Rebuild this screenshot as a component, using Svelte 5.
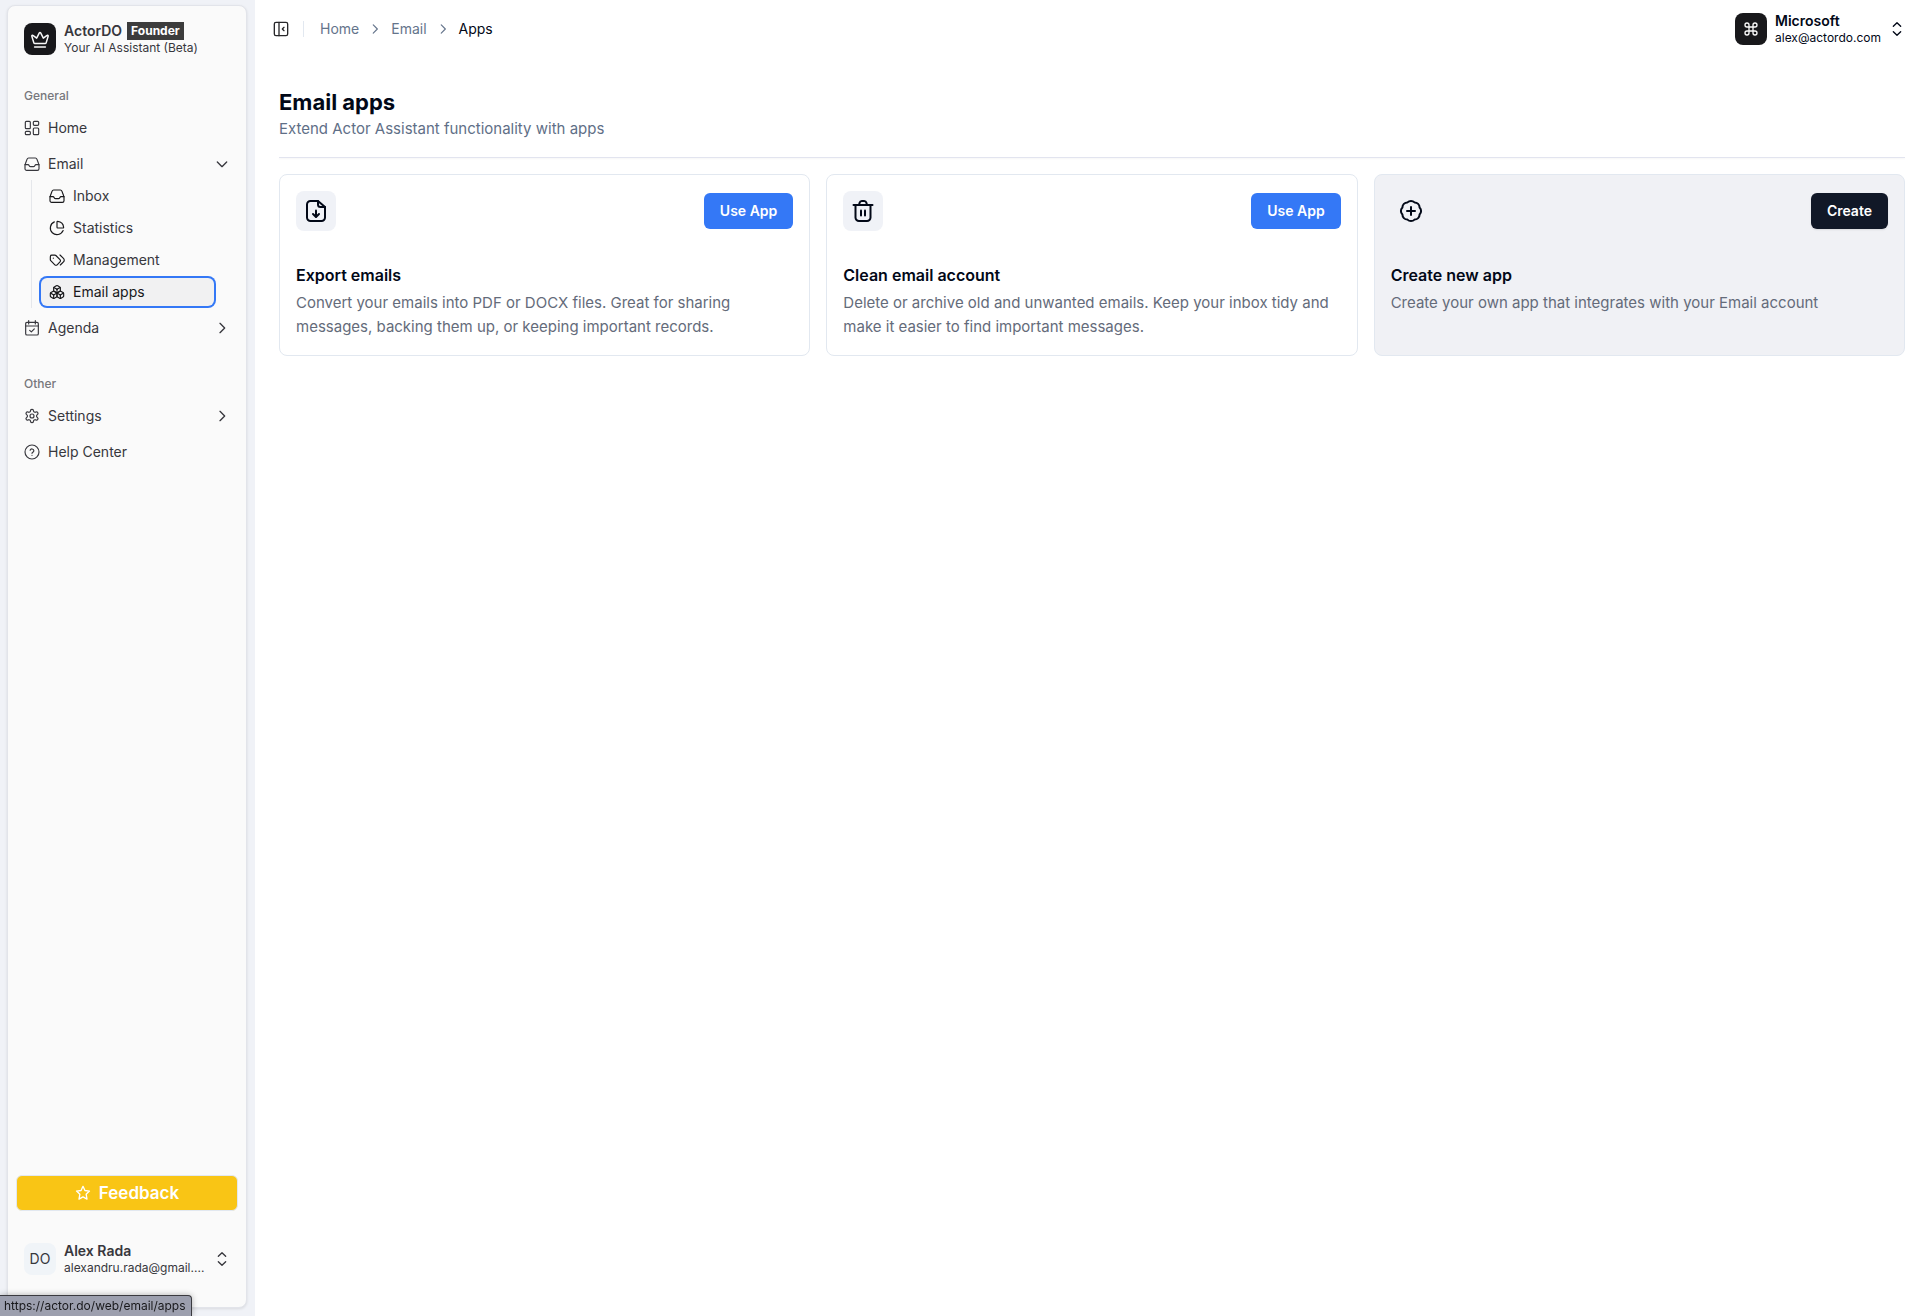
<script lang="ts">
  interface NavItem {
    label: string;
    icon: string;
    chevron?: 'down' | 'right';
    children?: { label: string; icon: string; active?: boolean }[];
  }

  interface NavGroup {
    title: string;
    items: NavItem[];
  }

  // Stroke icons on a 24x24 grid
  const icons: Record<string, string[]> = {
    dashboard: [
      'M3.500 2H8a1.500 1.500 0 0 1 1.500 1.500v8A1.500 1.500 0 0 1 8 13H3.500A1.500 1.500 0 0 1 2 11.500v-8A1.500 1.500 0 0 1 3.500 2z',
      'M15.500 2h5A1.500 1.500 0 0 1 22 3.500v3A1.500 1.500 0 0 1 20.500 8h-5A1.500 1.500 0 0 1 14 6.500v-3A1.500 1.500 0 0 1 15.500 2z',
      'M15.500 12h5a1.500 1.500 0 0 1 1.500 1.500v7a1.500 1.500 0 0 1-1.500 1.500h-5a1.500 1.500 0 0 1-1.500-1.500v-7a1.500 1.500 0 0 1 1.500-1.500z',
      'M3.500 17H8a1.500 1.500 0 0 1 1.500 1.500v2A1.500 1.500 0 0 1 8 22H3.500A1.500 1.500 0 0 1 2 20.500v-2A1.500 1.500 0 0 1 3.500 17z'
    ],
    inbox: [
      'M1.500 13H6c1 0 1.300.5 1.800 1.500S9 16 10 16h4c1 0 1.700-.5 2.200-1.500S17 13 18 13h4.500',
      'M4.500 5C5 3.600 5.800 3 7 3h10c1.200 0 2 .6 2.500 2l2.600 7c.3.700.4 1.200.4 2v5a2.500 2.500 0 0 1-2.500 2.500H4A2.500 2.500 0 0 1 1.500 19v-5c0-.8.1-1.300.4-2z'
    ],
    pie: [
      'M21 12c.552 0 1.005-.449.95-.998a10 10 0 0 0-8.953-8.951c-.55-.055-.998.398-.998.95v8a1 1 0 0 0 1 1z',
      'M21.210 15.890A10 10 0 1 1 8 2.830'
    ],
    tags: [
      'M2 7v4.600a2 2 0 0 0 .6 1.400l6.200 6.200a2.400 2.400 0 0 0 3.400 0l4.300-4.300a2.400 2.400 0 0 0 0-3.400l-6.200-6.200A2 2 0 0 0 8.900 4.700H4.300A2.300 2.300 0 0 0 2 7z',
      'M17 19.500l4.700-4.700a3.600 3.600 0 0 0 0-5.200L16.500 4.500',
      'M6.500 9.200h-.01'
    ],
    boxes: [
      'M2.970 12.920A2 2 0 0 0 2 14.630v3.240a2 2 0 0 0 .97 1.710l3 1.800a2 2 0 0 0 2.060 0L12 19v-5.500l-5-3-4.030 2.420Z',
      'm7 16.500-4.740-2.850',
      'm7 16.500 5-3',
      'M7 16.500v5.170',
      'M12 13.500V19l3.970 2.380a2 2 0 0 0 2.060 0l3-1.800a2 2 0 0 0 .97-1.710v-3.240a2 2 0 0 0-.97-1.710L17 10.500l-5 3Z',
      'm17 16.500-5-3',
      'm17 16.500 4.740-2.850',
      'M17 16.500v5.170',
      'M7.970 4.420A2 2 0 0 0 7 6.130v4.370l5 3 5-3V6.130a2 2 0 0 0-.97-1.710l-3-1.800a2 2 0 0 0-2.060 0l-3 1.800Z',
      'M12 8 7.260 5.150',
      'm12 8 4.740-2.850',
      'M12 13.500V8'
    ],
    calendar: [
      'M7 1v5',
      'M17 1v5',
      'M4.500 3.500h15a2 2 0 0 1 2 2V20.500a2 2 0 0 1-2 2h-15a2 2 0 0 1-2-2V5.500a2 2 0 0 1 2-2z',
      'M2.500 9h19',
      'm8.500 15.500 2.500 2.300 4.500-4.600'
    ],
    gear: [
      'M12.220 2h-.44a2 2 0 0 0-2 2v.18a2 2 0 0 1-1 1.730l-.43.25a2 2 0 0 1-2 0l-.15-.08a2 2 0 0 0-2.730.730l-.22.38a2 2 0 0 0 .73 2.730l.15.1a2 2 0 0 1 1 1.720v.51a2 2 0 0 1-1 1.740l-.15.09a2 2 0 0 0-.73 2.730l.22.38a2 2 0 0 0 2.730.730l.15-.08a2 2 0 0 1 2 0l.43.25a2 2 0 0 1 1 1.730V20a2 2 0 0 0 2 2h.44a2 2 0 0 0 2-2v-.18a2 2 0 0 1 1-1.730l.43-.25a2 2 0 0 1 2 0l.15.08a2 2 0 0 0 2.730-.73l.22-.39a2 2 0 0 0-.73-2.730l-.15-.08a2 2 0 0 1-1-1.740v-.5a2 2 0 0 1 1-1.740l.15-.09a2 2 0 0 0 .73-2.730l-.22-.38a2 2 0 0 0-2.730-.73l-.15.08a2 2 0 0 1-2 0l-.43-.25a2 2 0 0 1-1-1.730V4a2 2 0 0 0-2-2z',
      'M15 12a3 3 0 1 1-6 0 3 3 0 0 1 6 0z'
    ],
    help: [
      'M22.500 12a10.500 10.500 0 1 1-21 0 10.500 10.500 0 0 1 21 0z',
      'M9.200 9.300a2.900 2.900 0 0 1 5.600.900c0 1.900-2.800 2.200-2.800 3.800',
      'M12 17h.01'
    ],
    crown: [
      'M6 17.500c-.8 0-1.300-.4-1.500-1.200L2.200 8.600c-.3-1 .5-1.600 1.300-.9L8 11l3.200-6.300c.4-.7 1.200-.7 1.600 0L16 11l4.500-3.300c.8-.7 1.600-.1 1.300.9l-2.300 7.700c-.2.800-.7 1.200-1.500 1.200z',
      'M5.500 21.500h13'
    ],
    command: [
      'M15 6v12a3 3 0 1 0 3-3H6a3 3 0 1 0 3 3V6a3 3 0 1 0-3 3h12a3 3 0 1 0-3-3'
    ],
    star: [
      'm12 2 2.900 6.200 6.800.9-5 4.700 1.300 7.400-6-3.500-6 3.500 1.300-7.400-5-4.700 6.800-.9z'
    ],
    file: [
      'M14 2H6.500A3.500 3.500 0 0 0 3 5.500v13A3.500 3.500 0 0 0 6.500 22h11a3.500 3.500 0 0 0 3.500-3.500V8z',
      'M14 2v3.500A2.500 2.500 0 0 0 16.500 8H21',
      'M12 11.500v6',
      'M9 15l3 3 3-3'
    ],
    trash: [
      'M2.500 6h19',
      'M4.500 6v12.500A3.500 3.500 0 0 0 8 22h8a3.500 3.500 0 0 0 3.500-3.500V6',
      'M8 6l.6-2.200C8.900 2.700 9.700 2 10.800 2h2.400c1.100 0 1.900.7 2.200 1.800L16 6',
      'M10 11.500v5',
      'M14 11.500v5'
    ],
    badge: [
      'M8.440 3.410a5 5 0 0 1 7.120 0 5 5 0 0 1 5.030 5.030 5 5 0 0 1 0 7.120 5 5 0 0 1-5.030 5.030 5 5 0 0 1-7.120 0 5 5 0 0 1-5.030-5.030 5 5 0 0 1 0-7.120 5 5 0 0 1 5.030-5.030z',
      'M12 8v8',
      'M8 12h8'
    ],
    panel: [
      'M4.500 2h15A2.500 2.500 0 0 1 22 4.500v15a2.500 2.500 0 0 1-2.500 2.500h-15A2.500 2.500 0 0 1 2 19.500v-15A2.500 2.500 0 0 1 4.500 2z',
      'M9 2v20',
      'm16.500 9.500-2.500 2.500 2.500 2.500'
    ],
    down: ['m5 9 7 7 7-7'],
    right: ['m9 5 7 7-7 7'],
    updown: ['m6.500 8 5.500-5.500L17.500 8', 'm6.500 16 5.500 5.500 5.500-5.500']
  };

  const groups: NavGroup[] = [
    {
      title: 'General',
      items: [
        { label: 'Home', icon: 'dashboard' },
        {
          label: 'Email',
          icon: 'inbox',
          chevron: 'down',
          children: [
            { label: 'Inbox', icon: 'inbox' },
            { label: 'Statistics', icon: 'pie' },
            { label: 'Management', icon: 'tags' },
            { label: 'Email apps', icon: 'boxes', active: true }
          ]
        },
        { label: 'Agenda', icon: 'calendar', chevron: 'right' }
      ]
    },
    {
      title: 'Other',
      items: [
        { label: 'Settings', icon: 'gear', chevron: 'right' },
        { label: 'Help Center', icon: 'help' }
      ]
    }
  ];

  const apps = [
    {
      title: 'Export emails',
      text: 'Convert your emails into PDF or DOCX files. Great for sharing messages, backing them up, or keeping important records.',
      icon: 'file',
      action: 'Use App'
    },
    {
      title: 'Clean email account',
      text: 'Delete or archive old and unwanted emails. Keep your inbox tidy and make it easier to find important messages.',
      icon: 'trash',
      action: 'Use App'
    },
    {
      title: 'Create new app',
      text: 'Create your own app that integrates with your Email account',
      icon: 'badge',
      action: 'Create',
      create: true
    }
  ];
</script>

<svelte:head>
  <title>Email apps | ActorDO</title>
</svelte:head>

{#snippet icon(name: string, size = 16, stroke = 1.75)}
  <svg
    width={size}
    height={size}
    viewBox="0 0 24 24"
    fill="none"
    stroke="currentColor"
    stroke-width={stroke}
    stroke-linecap="round"
    stroke-linejoin="round"
    aria-hidden="true"
  >
    {#each icons[name] as d}
      <path {d} />
    {/each}
  </svg>
{/snippet}

<div class="layout">
  <aside class="sidebar">
    <div class="panel">
      <div class="brand">
        <a class="account" href="#home">
          <span class="logo">{@render icon('crown', 20)}</span>
          <span class="account-text">
            <span class="account-name">ActorDO <span class="plan">Founder</span></span>
            <span class="account-sub">Your AI Assistant (Beta)</span>
          </span>
        </a>
      </div>

      <nav class="nav">
        {#each groups as group (group.title)}
          <section class="group">
            <h2>{group.title}</h2>
            <ul class="menu">
              {#each group.items as item (item.label)}
                <li>
                  {#if item.chevron}
                    <button class="row" type="button" aria-expanded={item.chevron === 'down'}>
                      {@render icon(item.icon)}
                      <span class="row-label">{item.label}</span>
                      {@render icon(item.chevron, 16, 2)}
                    </button>
                  {:else}
                    <a class="row" href="#{item.icon}">
                      {@render icon(item.icon)}
                      <span class="row-label">{item.label}</span>
                    </a>
                  {/if}
                  {#if item.children}
                    <ul class="submenu">
                      {#each item.children as child (child.label)}
                        <li>
                          <a class="subrow" class:active={child.active} href="#{child.icon}">
                            {@render icon(child.icon)}
                            <span>{child.label}</span>
                          </a>
                        </li>
                      {/each}
                    </ul>
                  {/if}
                </li>
              {/each}
            </ul>
          </section>
        {/each}
      </nav>

      <div class="foot">
        <button class="feedback" type="button">
          {@render icon('star', 16, 2)}
          Feedback
        </button>
        <button class="account" type="button">
          <span class="avatar">DO</span>
          <span class="account-text">
            <span class="account-name">Alex Rada</span>
            <span class="account-sub">alexandru.rada@gmail....</span>
          </span>
          {@render icon('updown', 16, 2)}
        </button>
      </div>
    </div>
  </aside>

  <div class="content">
    <header class="topbar">
      <button class="toggle" type="button" aria-label="Toggle sidebar">
        {@render icon('panel', 16, 2)}
      </button>
      <span class="divider"></span>
      <nav class="crumbs" aria-label="Breadcrumb">
        <a href="#home">Home</a>
        {@render icon('right', 14, 2)}
        <a href="#email">Email</a>
        {@render icon('right', 14, 2)}
        <span class="current">Apps</span>
      </nav>
      <button class="account switcher" type="button">
        <span class="logo">{@render icon('command', 16, 2)}</span>
        <span class="account-text">
          <span class="account-name">Microsoft</span>
          <span class="account-sub">alex@actordo.com</span>
        </span>
        {@render icon('updown', 16, 2)}
      </button>
    </header>

    <main>
      <h1>Email apps</h1>
      <p class="lead">Extend Actor Assistant functionality with apps</p>
      <hr />

      <div class="cards">
        {#each apps as app (app.title)}
          <article class="card" class:create={app.create}>
            <div class="card-top">
              <span class="card-icon">{@render icon(app.icon, 24, 2)}</span>
              <button class="action" type="button">{app.action}</button>
            </div>
            <h3>{app.title}</h3>
            <p>{app.text}</p>
          </article>
        {/each}
      </div>
    </main>
  </div>
</div>

<div class="status">https://actor.do/web/email/apps</div>

<style>
  :global(body) {
    margin: 0;
    background: #fff;
  }

  .layout {
    display: flex;
    min-height: 100vh;
    font-family: Inter, 'Liberation Sans', sans-serif;
    font-size: 14px;
    line-height: 20px;
    color: #020817;
  }

  a {
    color: inherit;
    text-decoration: none;
  }

  button {
    border: 0;
    background: none;
    font: inherit;
    color: inherit;
    text-align: left;
    cursor: pointer;
  }

  h1,
  h2,
  h3,
  p,
  ul {
    margin: 0;
    padding: 0;
  }

  ul {
    list-style: none;
  }

  svg {
    display: block;
    flex-shrink: 0;
  }

  .sidebar {
    display: flex;
    flex: none;
    width: 255px;
    box-sizing: border-box;
    padding: 5px 8px 8px 7px;
    background: #f0f2f7;
    color: #37373d;
  }

  .panel {
    display: flex;
    flex: 1;
    flex-direction: column;
    min-width: 0;
    border: 1px solid #e2e4ea;
    border-radius: 8px;
    background: #fafafa;
    box-shadow: 0 1px 3px rgba(0, 0, 0, 0.1);
  }

  .brand {
    padding: 9px 8px;
  }

  .account {
    display: flex;
    align-items: center;
    gap: 8px;
    width: 100%;
    height: 48px;
    box-sizing: border-box;
    padding: 8px;
  }

  .account-text {
    display: flex;
    flex: 1;
    flex-direction: column;
    min-width: 0;
  }

  .account-name {
    display: flex;
    align-items: center;
    gap: 5px;
    font-weight: 600;
    line-height: 18px;
  }

  .account-sub {
    font-size: 12px;
    line-height: 16px;
    white-space: nowrap;
  }

  .plan {
    padding: 0 4px;
    background: #3c3c3c;
    font-size: 12px;
    font-weight: 700;
    color: #fff;
  }

  .logo,
  .avatar {
    display: flex;
    flex: none;
    align-items: center;
    justify-content: center;
    width: 32px;
    height: 32px;
    border-radius: 8px;
  }

  .logo {
    background: #18181b;
    color: #fafafa;
  }

  .avatar {
    background: #f0f4f8;
  }

  .nav {
    display: flex;
    flex: 1;
    flex-direction: column;
    gap: 8px;
  }

  .group {
    padding: 8px;
  }

  .group h2 {
    padding: 0 8px;
    font-size: 12px;
    font-weight: 500;
    line-height: 32px;
    color: #77777c;
  }

  .menu,
  .submenu {
    display: flex;
    flex-direction: column;
    gap: 4px;
  }

  .row {
    display: flex;
    align-items: center;
    gap: 8px;
    width: 100%;
    height: 32px;
    box-sizing: border-box;
    padding: 8px;
  }

  .row-label {
    flex: 1;
  }

  .submenu {
    margin: 0 14px 0 15px;
    padding: 2px 10px 2px 9px;
    border-left: 1px solid #e5e7eb;
  }

  .subrow {
    display: flex;
    align-items: center;
    gap: 8px;
    height: 28px;
    padding: 0 8px;
    border-radius: 6px;
  }

  .subrow svg {
    color: #18181b;
  }

  .active {
    background: #f1f1f2;
    box-shadow: 0 0 0 2px #3478f6;
    color: #18181b;
  }

  .foot {
    display: flex;
    flex-direction: column;
    gap: 24px;
    padding: 8px 8px 24px;
  }

  .feedback {
    display: flex;
    align-items: center;
    justify-content: center;
    gap: 8px;
    height: 36px;
    border: 1px solid #e2e8f0;
    border-radius: 6px;
    background: #f9c515;
    font-size: 17px;
    font-weight: 600;
    color: #fff;
  }

  .content {
    flex: 1;
    min-width: 0;
  }

  .topbar {
    display: flex;
    align-items: center;
    height: 58px;
    padding: 0 14px 0 16px;
  }

  .toggle {
    padding: 2px;
    color: #27272a;
  }

  .divider {
    width: 1px;
    height: 16px;
    margin: 0 16px 0 12px;
    background: #e2e8f0;
  }

  .crumbs {
    display: flex;
    flex: 1;
    align-items: center;
    gap: 9px;
    color: #64748b;
  }

  .current {
    color: #020817;
  }

  .switcher {
    width: auto;
  }

  main {
    padding: 29px 22px 24px 24px;
  }

  h1 {
    font-size: 22px;
    font-weight: 700;
    line-height: 30px;
  }

  .lead {
    font-size: 15px;
    line-height: 24px;
    color: #5f6f87;
  }

  hr {
    height: 1px;
    margin: 16px 0;
    border: 0;
    background: #e2e4ef;
    box-shadow: 0 1px 2px rgba(0, 0, 0, 0.05);
  }

  .cards {
    display: grid;
    grid-template-columns: repeat(3, 1fr);
    gap: 16px;
  }

  .card {
    padding: 16px;
    border: 1px solid #e2e8f0;
    border-radius: 8px;
    font-size: 15px;
    line-height: 24px;
  }

  .card-top {
    display: flex;
    align-items: center;
    justify-content: space-between;
    margin-bottom: 32px;
  }

  .card-icon {
    display: flex;
    align-items: center;
    justify-content: center;
    width: 40px;
    height: 40px;
    border-radius: 8px;
    background: #f0f2f7;
  }

  .card h3 {
    margin-bottom: 4px;
    font-size: 16px;
    font-weight: 600;
  }

  .card p {
    color: #646b7a;
  }

  .action {
    height: 36px;
    padding: 0 16px;
    border-radius: 6px;
    background: #3478f6;
    font-size: 14px;
    font-weight: 600;
    color: #fff;
  }

  .create {
    background: #f0f1f5;
  }

  .create .card-icon {
    background: none;
  }

  .create .action {
    background: #111827;
    box-shadow: 0 1px 2px rgba(0, 0, 0, 0.1);
  }

  /* Link target shown over the bottom left corner */
  .status {
    position: fixed;
    bottom: 0;
    left: 0;
    padding: 0 5px 0 4px;
    border-top: 1px solid #3a3a3f;
    border-right: 1px solid #3a3a3f;
    border-top-right-radius: 4px;
    background: #9c9fae;
    box-shadow: 0 0 6px rgba(0, 0, 0, 0.3);
    font-family: Inter, 'Liberation Sans', sans-serif;
    font-size: 12px;
    line-height: 20px;
    color: #18181b;
  }

  @media (max-width: 1000px) {
    .cards {
      grid-template-columns: 1fr;
    }
  }
</style>
